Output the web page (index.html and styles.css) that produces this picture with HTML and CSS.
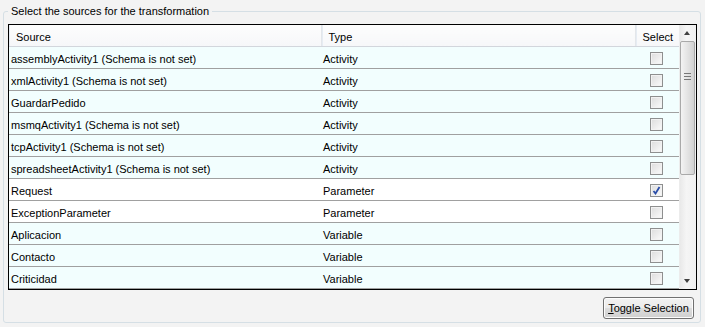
FILE: index.html
```html
<!DOCTYPE html>
<html lang="en">
	<head>
		<meta charset="UTF-8" />
		<title>Select the sources</title>
		<link rel="stylesheet" href="styles.css">
	</head>
	<body>
		<fieldset class="group">
			<legend>Select the sources for the transformation</legend>

			<div class="grid">
				<div class="grid-body">
					<table class="sources">
						<colgroup>
							<col class="col-source" />
							<col class="col-type" />
							<col class="col-select" />
						</colgroup>
						<thead>
							<tr>
								<th>Source</th>
								<th>Type</th>
								<th class="sel">Select</th>
							</tr>
						</thead>
						<tbody>
							<tr class="tint"><td>assemblyActivity1 (Schema is not set)</td><td>Activity</td><td class="sel"><span class="check"></span></td></tr>
							<tr class="tint"><td>xmlActivity1 (Schema is not set)</td><td>Activity</td><td class="sel"><span class="check"></span></td></tr>
							<tr class="tint"><td>GuardarPedido</td><td>Activity</td><td class="sel"><span class="check"></span></td></tr>
							<tr class="tint"><td>msmqActivity1 (Schema is not set)</td><td>Activity</td><td class="sel"><span class="check"></span></td></tr>
							<tr class="tint"><td>tcpActivity1 (Schema is not set)</td><td>Activity</td><td class="sel"><span class="check"></span></td></tr>
							<tr class="tint"><td>spreadsheetActivity1 (Schema is not set)</td><td>Activity</td><td class="sel"><span class="check"></span></td></tr>
							<tr><td>Request</td><td>Parameter</td><td class="sel"><span class="check on"><svg width="9" height="9" viewBox="0 0 9 9"><path d="M1.5 5 L3.5 7.5 L7.5 1" fill="none" stroke="#2a4da8" stroke-width="1.8"/></svg></span></td></tr>
							<tr><td>ExceptionParameter</td><td>Parameter</td><td class="sel"><span class="check"></span></td></tr>
							<tr class="tint"><td>Aplicacion</td><td>Variable</td><td class="sel"><span class="check"></span></td></tr>
							<tr class="tint"><td>Contacto</td><td>Variable</td><td class="sel"><span class="check"></span></td></tr>
							<tr class="tint"><td>Criticidad</td><td>Variable</td><td class="sel"><span class="check"></span></td></tr>
						</tbody>
					</table>
				</div>

				<!-- vertical scrollbar -->
				<div class="scrollbar">
					<div class="arrow up"></div>
					<div class="track">
						<div class="thumb"><span class="grip"></span></div>
					</div>
					<div class="arrow down"></div>
				</div>
			</div>

			<div class="actions">
				<button type="button"><u>T</u>oggle Selection</button>
			</div>
		</fieldset>
	</body>
</html>
```

FILE: styles.css
```css
/* base */
body {
	margin: 0;
	padding-top: 4px;
	background-color: #f3f3f3;
	font-family: 'Liberation Sans', Arial, sans-serif;
	font-size: 11px;
	color: #000;
}

fieldset.group {
	margin: 0 4px 0 3px;
	padding: 6px 3px 3px 4px;
	border: 1px solid #d5dfe5;
	border-radius: 3px;
}

fieldset.group legend {
	padding: 0 3px;
	font-size: 11px;
	line-height: 14px;
}

.grid {
	display: flex;
	height: 264px;
	border: 1px solid #000;
	background: #fff;
}

.grid-body {
	flex: 1;
	overflow: hidden;
}

table.sources {
	width: 100%;
	border-collapse: collapse;
	table-layout: fixed;
}

.col-source { width: 312px; }
.col-type { width: 314px; }
.col-select { width: 44px; }

table.sources th {
	height: 19px;
	padding: 2px 7px 0;
	text-align: left;
	font-weight: normal;
	background: linear-gradient(#fdfdfd, #f6f7f9);
	border-right: 1px solid #e3e6ea;
	border-bottom: 1px solid #d2d6dc;
	box-shadow: inset 1px 0 0 #e6ecf3;
}

table.sources th.sel {
	text-align: right;
	padding-right: 6px;
	border-right: none;
}

table.sources td {
	height: 19px;
	padding: 2px 2px 0;
	border-bottom: 1px solid #a0a0a0;
	white-space: nowrap;
	overflow: hidden;
}

table.sources tr.tint td {
	background: #f2fefe;
}

table.sources td.sel {
	text-align: right;
	padding-right: 16px;
}

.check {
	display: inline-block;
	width: 11px;
	height: 11px;
	border: 1px solid #8e8f8f;
	background: linear-gradient(135deg, #dcdcdc, #fbfbfb);
	box-shadow: inset 0 0 0 1px #f2f2f2;
	vertical-align: middle;
	position: relative;
	margin-top: -3px;
}

.check svg {
	position: absolute;
	left: 1px;
	top: 1px;
}

/* scrollbar */
.scrollbar {
	width: 16px;
	display: flex;
	flex-direction: column;
	background: linear-gradient(90deg, #e9e9e9, #f5f5f5 40%, #f0f0f0);
	border-left: 1px solid #ececec;
}

.arrow {
	height: 16px;
	position: relative;
}

.arrow::after {
	content: '';
	position: absolute;
	left: 4px;
	border-left: 3.5px solid transparent;
	border-right: 3.5px solid transparent;
}

.arrow.up::after {
	top: 6px;
	border-bottom: 4px solid #404040;
}

.arrow.down::after {
	top: 6px;
	border-top: 4px solid #404040;
}

.track {
	flex: 1;
}

.thumb {
	margin: 0 1px 0 0;
	height: 132px;
	border: 1px solid #a9a9a9;
	border-radius: 2px;
	background: linear-gradient(90deg, #f3f3f3, #e3e3e3 50%, #d2d2d2);
	display: flex;
	align-items: center;
	justify-content: center;
}

.grip {
	width: 7px;
	height: 5px;
	border-top: 1px solid #777;
	border-bottom: 1px solid #777;
	position: relative;
	margin-top: -64px;
}

.grip::after {
	content: '';
	position: absolute;
	left: 0;
	right: 0;
	top: 2px;
	border-top: 1px solid #777;
}

.actions {
	display: flex;
	justify-content: flex-end;
	padding: 7px 3px 0 0;
}

button {
	width: 91px;
	height: 22px;
	padding: 0;
	font-family: 'Liberation Sans', Arial, sans-serif;
	font-size: 11px;
	color: #000;
	border: 1px solid #707070;
	border-radius: 3px;
	background: linear-gradient(#f2f2f2 0%, #ebebeb 50%, #dddddd 51%, #cfcfcf 100%);
	box-shadow: inset 0 0 0 1px #fcfcfc;
}
```
